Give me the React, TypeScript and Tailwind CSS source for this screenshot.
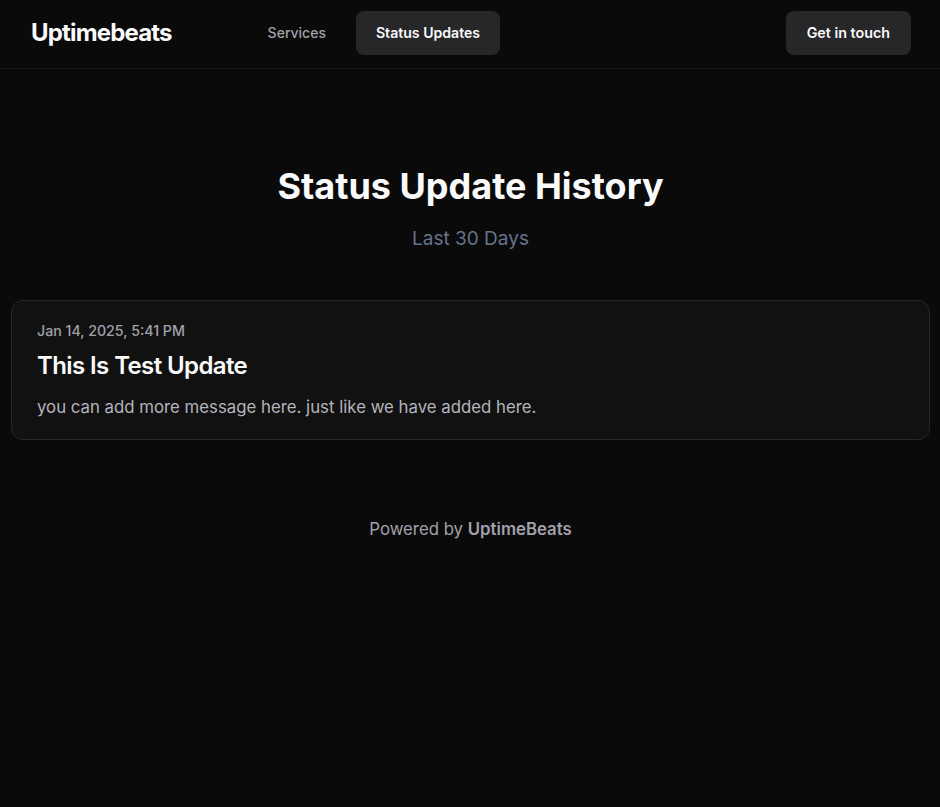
import React from "react";

export default function App() {
  return (
    <div
      className="min-h-[807px] w-full bg-[#0a0a0a] text-white"
      style={{ fontFamily: "Inter, 'Noto Sans', sans-serif" }}
    >
      <header className="border-b border-[#18181b] pl-[31px] pr-[29px] pt-[11px] pb-[13px]">
        <div className="flex h-[44px] items-center justify-between">
          <div className="flex items-center">
            <div className="text-[24px] font-bold tracking-[-0.035em] text-[#fafafa]">Uptimebeats</div>
            <nav className="ml-[76px] flex items-center gap-[10px]">
              <a className="flex h-[44px] items-center rounded-lg px-5 text-sm font-medium text-[#a1a1aa]">Services</a>
              <a className="flex h-[44px] items-center rounded-lg bg-[#27272a] px-5 text-[14.1px] font-semibold text-[#fafafa]">
                Status Updates
              </a>
            </nav>
          </div>
          <button className="flex h-[44px] items-center rounded-lg bg-[#27272a] px-[21px] text-[14.3px] font-semibold text-[#fafafa]">
            Get in touch
          </button>
        </div>
      </header>

      <main className="pl-[11px] pr-[10px]">
        <div className="pt-[97px] text-center">
          <h1 className="text-[36px] font-bold leading-[40px] text-[#fafafa]">Status Update History</h1>
          <p className="mt-[19px] text-[19px] leading-[28px] text-[#64748b]">Last 30 Days</p>
        </div>

        <div className="mt-[47px] rounded-xl border border-[#27272a] bg-[#111111] px-[25px] pt-[20px] pb-[20px]">
          <div className="text-[14.2px] leading-5 font-medium text-[#a1a1aa]">Jan 14, 2025, 5:41 PM</div>
          <h2 className="mt-[9px] text-[24px] leading-8 font-semibold tracking-[-0.025em] text-[#fafafa]">This Is Test Update</h2>
          <p className="mt-[13px] text-[16.8px] leading-6 text-[#b4b4bc]">
            you can add more message here. just like we have added here.
          </p>
        </div>

        <div className="mt-[77px] text-center text-[16.8px] leading-6 text-[#a1a1aa]">
          Powered by <span className="font-semibold">UptimeBeats</span>
        </div>
      </main>
    </div>
  );
}
